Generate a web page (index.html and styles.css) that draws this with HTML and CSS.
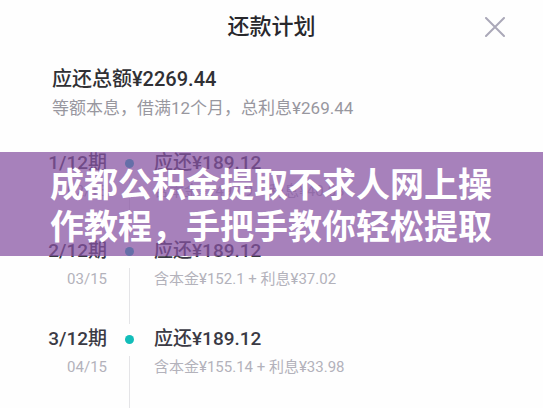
FILE: index.html
```html
<!DOCTYPE html>
<html lang="zh-CN">
<head>
<meta charset="utf-8">
<meta name="viewport" content="width=device-width, initial-scale=1">
<title>还款计划</title>
<link rel="stylesheet" href="styles.css">
</head>
<body>
<main class="sheet">
  <header class="sheet-header">
    <h1 class="title">还款计划</h1>
    <button class="close" type="button" aria-label="关闭">
      <svg class="close-icon" viewBox="0 0 20 20" aria-hidden="true"><path d="M1 1L19 19M19 1L1 19"/></svg>
    </button>
  </header>
  <section class="summary">
    <p class="total">应还总额¥2269.44</p>
    <p class="terms">等额本息，借满12个月，总利息¥269.44</p>
  </section>
  <ol class="plan">
    <li class="row">
      <div class="when"><p class="term">1/12期</p><p class="note">02/15</p></div>
      <div class="rail"><span class="dot"></span></div>
      <div class="amount"><p class="term">应还¥189.12</p><p class="note">含本金¥149.09 + 利息¥40.03</p></div>
    </li>
    <li class="row">
      <div class="when"><p class="term">2/12期</p><p class="note">03/15</p></div>
      <div class="rail"><span class="dot"></span></div>
      <div class="amount"><p class="term">应还¥189.12</p><p class="note">含本金¥152.1 + 利息¥37.02</p></div>
    </li>
    <li class="row">
      <div class="when"><p class="term">3/12期</p><p class="note">04/15</p></div>
      <div class="rail"><span class="dot"></span></div>
      <div class="amount"><p class="term">应还¥189.12</p><p class="note">含本金¥155.14 + 利息¥33.98</p></div>
    </li>
  </ol>
  <div class="banner"><h2 class="headline">成都公积金提取不求人网上操作教程，手把手教你轻松提取</h2></div>
</main>
</body>
</html>
```

FILE: styles.css
```css
* {
  box-sizing: border-box;
}

body {
  margin: 0;
  background: #fefefe;
  color: #3a3a44;
  font-family: Roboto, "Noto Sans CJK SC", sans-serif;
}

h1, h2, p, ol {
  margin: 0;
  padding: 0;
}

.sheet {
  position: relative;
  height: 100vh;
  overflow: hidden;
}

.sheet-header {
  display: grid;
  grid-template-columns: 1fr auto 1fr;
  align-items: center;
  height: 54px;
  padding: 0 38px;
}

.title {
  grid-column: 2;
  color: #28282c;
  font-size: 22px;
  line-height: 32px;
  font-weight: 500;
}

.close {
  justify-self: end;
  display: flex;
  padding: 0;
  border: 0;
  background: none;
}

.close-icon {
  width: 20px;
  height: 20px;
  fill: none;
  stroke: #aaa8b8;
  stroke-width: 2;
  stroke-linecap: round;
}

.summary {
  padding: 11px 52px 0;
}

.total {
  color: #303034;
  font-size: 20px;
  line-height: 28px;
  font-weight: 500;
}

.terms {
  color: #98979f;
  font-size: 17px;
  line-height: 30px;
}

.plan {
  padding-top: 26px;
  list-style: none;
}

.row {
  display: grid;
  grid-template-columns: 107px 44px 1fr;
  height: 88px;
}

.when {
  text-align: right;
}

.term {
  font-size: 19px;
  line-height: 28px;
  font-weight: 500;
  white-space: nowrap;
}

.note {
  color: #b3b2bb;
  font-size: 15px;
  line-height: 28px;
  white-space: nowrap;
}

.rail {
  display: flex;
  flex-direction: column;
  align-items: center;
  padding-top: 10px;
}

.rail::after {
  content: "";
  width: 1px;
  flex: 1;
  margin-top: 12px;
  margin-bottom: 1px;
  background: #e4e4e7;
}

.dot {
  width: 9px;
  height: 9px;
  border-radius: 50%;
  background: #12bdb9;
}

.amount {
  padding-left: 3px;
}

.banner {
  position: absolute;
  top: 152px;
  left: 0;
  right: 0;
  padding: 10px 50px;
  background: rgba(133, 80, 161, 0.72);
}

.headline {
  color: #fff;
  font-family: "Noto Sans CJK SC", sans-serif;
  font-size: 34px;
  line-height: 42px;
  font-weight: 700;
}
```
